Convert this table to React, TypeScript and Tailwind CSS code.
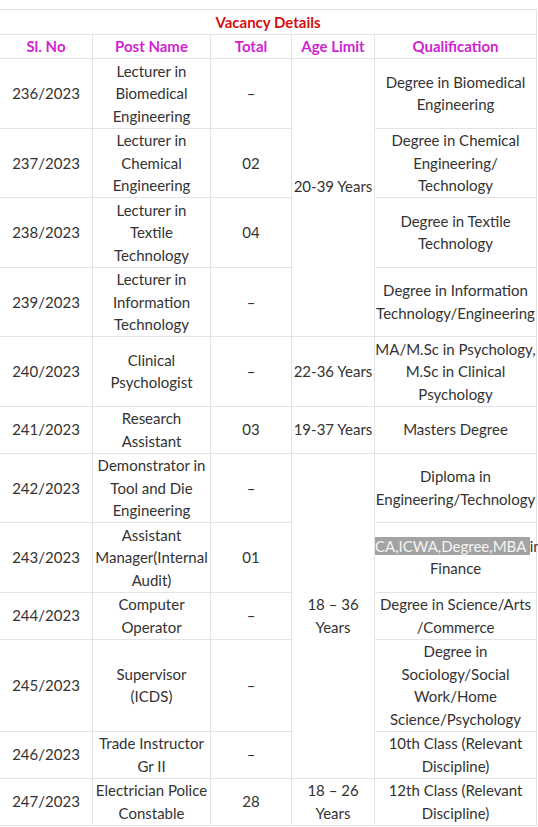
import React from "react";

type Row = {
  sl: string;
  post: string[];
  total: string;
  age?: { lines: string[]; span: number; extraBottom?: boolean };
  qual: React.ReactNode[];
};

const rows: Row[] = [
  { sl: "236/2023", post: ["Lecturer in", "Biomedical", "Engineering"], total: "–", age: { lines: ["20-39 Years"], span: 4, extraBottom: true }, qual: ["Degree in Biomedical", "Engineering"] },
  { sl: "237/2023", post: ["Lecturer in", "Chemical", "Engineering"], total: "02", qual: ["Degree in Chemical", "Engineering/", "Technology"] },
  { sl: "238/2023", post: ["Lecturer in", "Textile", "Technology"], total: "04", qual: ["Degree in Textile", "Technology"] },
  { sl: "239/2023", post: ["Lecturer in", "Information", "Technology"], total: "–", qual: ["Degree in Information", "Technology/Engineering"] },
  { sl: "240/2023", post: ["Clinical", "Psychologist"], total: "–", age: { lines: ["22-36 Years"], span: 1 }, qual: ["MA/M.Sc in Psychology,", "M.Sc in Clinical", "Psychology"] },
  { sl: "241/2023", post: ["Research", "Assistant"], total: "03", age: { lines: ["19-37 Years"], span: 1 }, qual: ["Masters Degree"] },
  { sl: "242/2023", post: ["Demonstrator in", "Tool and Die", "Engineering"], total: "–", age: { lines: ["18 – 36", "Years"], span: 5 }, qual: ["Diploma in", "Engineering/Technology"] },
  {
    sl: "243/2023",
    post: ["Assistant", "Manager(Internal", "Audit)"],
    total: "01",
    qual: [
      <span key="h">
        <span className="bg-[#a3a3a3] text-[#f4f4f4]">CA,ICWA,Degree,MBA </span>in
      </span>,
      "Finance",
    ],
  },
  { sl: "244/2023", post: ["Computer", "Operator"], total: "–", qual: ["Degree in Science/Arts", "/Commerce"] },
  { sl: "245/2023", post: ["Supervisor", "(ICDS)"], total: "–", qual: ["Degree in", "Sociology/Social", "Work/Home", "Science/Psychology"] },
  { sl: "246/2023", post: ["Trade Instructor", "Gr II"], total: "–", qual: ["10th Class (Relevant", "Discipline)"] },
  { sl: "247/2023", post: ["Electrician Police", "Constable"], total: "28", age: { lines: ["18 – 26", "Years"], span: 1 }, qual: ["12th Class (Relevant", "Discipline)"] },
];

function Lines({ lines }: { lines: React.ReactNode[] }) {
  return (
    <>
      {lines.map((l, i) => (
        <div key={i} className="whitespace-nowrap">
          {l}
        </div>
      ))}
    </>
  );
}

const cell = "border border-[#e3e3e3] px-0 py-[0.5px] text-center align-middle";

export default function App() {
  return (
    <div className="w-[538px] h-[827px] bg-white overflow-hidden pt-[9px] text-[#333] text-[15px] leading-[22.5px] font-['Lato','Open_Sans',sans-serif]">
      <table className="table-fixed border-collapse w-[536px] -ml-px">
        <colgroup>
          <col className="w-[93px]" />
          <col className="w-[118px]" />
          <col className="w-[81px]" />
          <col className="w-[83px]" />
          <col className="w-[162px]" />
        </colgroup>
        <tbody>
          <tr>
            <td colSpan={5} className="border border-[#e3e3e3] pt-px pb-0 text-center font-bold text-[#d40f0f]">
              Vacancy Details
            </td>
          </tr>
          <tr className="font-bold text-[#d21fd2]">
            <td className={cell}>Sl. No</td>
            <td className={cell}>Post Name</td>
            <td className={cell}>Total</td>
            <td className={cell}>Age Limit</td>
            <td className={cell}>Qualification</td>
          </tr>
          {rows.map((r) => (
            <tr key={r.sl}>
              <td className={cell}>{r.sl}</td>
              <td className={cell}>
                <Lines lines={r.post} />
              </td>
              <td className={cell}>{r.total}</td>
              {r.age && (
                <td rowSpan={r.age.span} className={cell + (r.age.extraBottom ? " pb-[23px]" : "")}>
                  <Lines lines={r.age.lines} />
                </td>
              )}
              <td className={cell}>
                <Lines lines={r.qual} />
              </td>
            </tr>
          ))}
        </tbody>
      </table>
    </div>
  );
}
